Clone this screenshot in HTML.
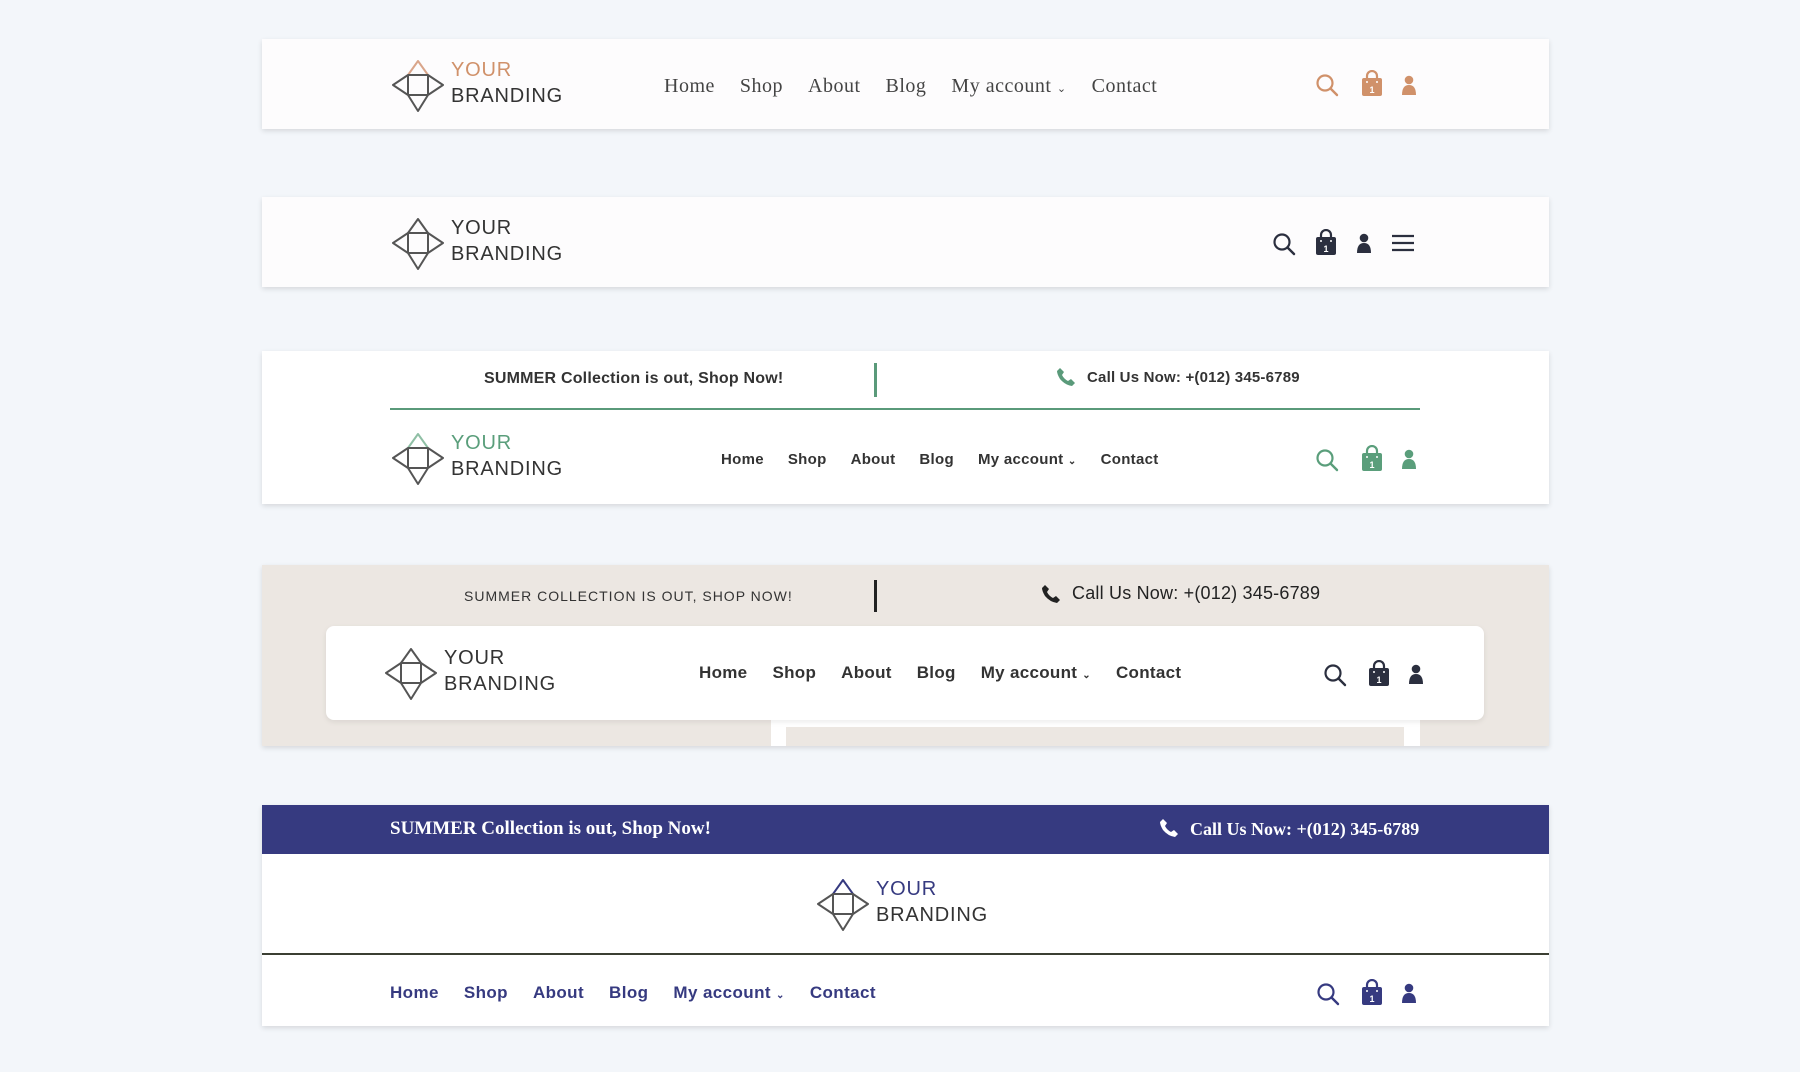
<!DOCTYPE html>
<html><head><meta charset="utf-8"><style>
*{margin:0;padding:0;box-sizing:border-box}
body{width:1800px;height:1072px;background:#f3f6fa;position:relative;overflow:hidden;font-family:"Liberation Sans",sans-serif}
.p{position:absolute;left:262px;width:1287px;box-shadow:0 2px 5px rgba(0,0,0,.12)}
.a{position:absolute;white-space:nowrap}
.logo{position:absolute;width:180px;height:56px}
.logo svg{position:absolute;left:0;top:2px}
.logo .t{position:absolute;left:59px;font-size:20px;letter-spacing:.8px;line-height:26px;color:#333}
.nav{position:absolute;display:flex;align-items:center;white-space:nowrap}
.ic{position:absolute}
</style></head><body>

<!-- Panel 1 -->
<div class="p" style="top:39px;height:90px;background:#fdfcfd"></div>
<div class="logo" style="left:392px;top:57px">
<svg width="52" height="54" viewBox="0 0 52 54"><g fill="none" stroke-width="2" stroke-linejoin="round"><path d="M26 2 L16 16 L36 16 Z" stroke="#d9a58a"/><path d="M16 16 H36 V36 H16 Z M16 16 L1 26 L16 36 M36 16 L51 26 L36 36 M16 36 L26 52 L36 36" stroke="#555"/></g></svg>
<div class="t" style="top:0;color:#d0916a">YOUR</div><div class="t" style="top:26px">BRANDING</div></div>
<div class="nav" style="left:664px;top:75px;font-family:'Liberation Serif',serif;font-size:20px;letter-spacing:.5px;color:#444;gap:25px">
<span>Home</span><span>Shop</span><span>About</span><span>Blog</span><span>My account <small style="font-size:11px">⌄</small></span><span>Contact</span></div>

<!-- Panel 2 -->
<div class="p" style="top:197px;height:90px;background:#fdfcfd"></div>
<div class="logo" style="left:392px;top:215px">
<svg width="52" height="54" viewBox="0 0 52 54"><g fill="none" stroke="#555" stroke-width="2" stroke-linejoin="round"><path d="M26 2 L16 16 L36 16 Z"/><path d="M16 16 H36 V36 H16 Z M16 16 L1 26 L16 36 M36 16 L51 26 L36 36 M16 36 L26 52 L36 36"/></g></svg>
<div class="t" style="top:0">YOUR</div><div class="t" style="top:26px">BRANDING</div></div>
<svg class="ic" style="left:1390px;top:233px" width="26" height="20" viewBox="0 0 26 20"><g stroke="#2b2f3f" stroke-width="2.2"><path d="M2 3H24M2 10H24M2 17H24"/></g></svg>

<!-- Panel 3 -->
<div class="p" style="top:351px;height:153px;background:#fff"></div>
<div class="a" style="left:484px;top:370px;font-size:16px;letter-spacing:.2px;font-weight:bold;color:#333">SUMMER Collection is out, Shop Now!</div>
<div class="a" style="left:874px;top:363px;width:3px;height:34px;background:#5a9a7a"></div>
<svg class="ic" style="left:1056px;top:367px" width="20" height="20" viewBox="0 0 20 20"><path d="M4 1 L8 5 L6 8 Q8 12 12 14 L15 12 L19 16 L16 19 Q9 18 4 12 Q1 7 1 4 Z" fill="#5a9a7a"/></svg>
<div class="a" style="left:1087px;top:369px;font-size:15px;letter-spacing:.2px;font-weight:bold;color:#333">Call Us Now: +(012) 345-6789</div>
<div class="a" style="left:390px;top:408px;width:1030px;height:2px;background:#5a9a7a"></div>
<div class="logo" style="left:392px;top:430px">
<svg width="52" height="54" viewBox="0 0 52 54"><g fill="none" stroke-width="2" stroke-linejoin="round"><path d="M26 2 L16 16 L36 16 Z" stroke="#8fbfa5"/><path d="M16 16 H36 V36 H16 Z M16 16 L1 26 L16 36 M36 16 L51 26 L36 36 M16 36 L26 52 L36 36" stroke="#555"/></g></svg>
<div class="t" style="top:0;color:#5a9e7b">YOUR</div><div class="t" style="top:26px">BRANDING</div></div>
<div class="nav" style="left:721px;top:451px;font-size:15px;letter-spacing:.3px;font-weight:bold;color:#333;gap:24px">
<span>Home</span><span>Shop</span><span>About</span><span>Blog</span><span>My account <small style="font-size:10px">⌄</small></span><span>Contact</span></div>

<!-- Panel 4 -->
<div class="p" style="top:565px;height:181px;background:#ece7e2"></div>
<div class="a" style="left:464px;top:588px;font-size:14px;color:#333;letter-spacing:1px">SUMMER COLLECTION IS OUT, SHOP NOW!</div>
<div class="a" style="left:874px;top:580px;width:3px;height:32px;background:#222"></div>
<svg class="ic" style="left:1041px;top:584px" width="20" height="20" viewBox="0 0 20 20"><path d="M4 1 L8 5 L6 8 Q8 12 12 14 L15 12 L19 16 L16 19 Q9 18 4 12 Q1 7 1 4 Z" fill="#222"/></svg>
<div class="a" style="left:1072px;top:583px;font-size:18px;letter-spacing:.2px;color:#222">Call Us Now: +(012) 345-6789</div>
<div class="a" style="left:771px;top:700px;width:649px;height:46px;background:#fff"></div>
<div class="a" style="left:786px;top:727px;width:618px;height:19px;background:#ece7e2"></div>
<div class="a" style="left:326px;top:626px;width:1158px;height:94px;background:#fff;border-radius:8px;box-shadow:0 2px 6px rgba(0,0,0,.08)"></div>
<div class="logo" style="left:385px;top:645px">
<svg width="52" height="54" viewBox="0 0 52 54"><g fill="none" stroke="#555" stroke-width="2" stroke-linejoin="round"><path d="M26 2 L16 16 L36 16 Z"/><path d="M16 16 H36 V36 H16 Z M16 16 L1 26 L16 36 M36 16 L51 26 L36 36 M16 36 L26 52 L36 36"/></g></svg>
<div class="t" style="top:0">YOUR</div><div class="t" style="top:26px">BRANDING</div></div>
<div class="nav" style="left:699px;top:663px;font-size:17px;letter-spacing:.3px;font-weight:bold;color:#333;gap:25px">
<span>Home</span><span>Shop</span><span>About</span><span>Blog</span><span>My account <small style="font-size:10px">⌄</small></span><span>Contact</span></div>

<!-- Panel 5 -->
<div class="p" style="top:805px;height:221px;background:#fff"></div>
<div class="a" style="left:262px;top:805px;width:1287px;height:49px;background:#363a80"></div>
<div class="a" style="left:390px;top:818px;font-family:'Liberation Serif',serif;font-weight:bold;font-size:19px;color:#fff">SUMMER Collection is out, Shop Now!</div>
<svg class="ic" style="left:1159px;top:818px" width="20" height="20" viewBox="0 0 20 20"><path d="M4 1 L8 5 L6 8 Q8 12 12 14 L15 12 L19 16 L16 19 Q9 18 4 12 Q1 7 1 4 Z" fill="#fff"/></svg>
<div class="a" style="left:1190px;top:819px;font-family:'Liberation Serif',serif;font-weight:bold;font-size:18px;color:#fff">Call Us Now: +(012) 345-6789</div>
<div class="logo" style="left:817px;top:876px">
<svg width="52" height="54" viewBox="0 0 52 54"><g fill="none" stroke-width="2" stroke-linejoin="round"><path d="M26 2 L16 16 L36 16 Z" stroke="#363a80"/><path d="M16 16 H36 V36 H16 Z M16 16 L1 26 L16 36 M36 16 L51 26 L36 36 M16 36 L26 52 L36 36" stroke="#555"/></g></svg>
<div class="t" style="top:0;color:#363a80">YOUR</div><div class="t" style="top:26px">BRANDING</div></div>
<div class="a" style="left:262px;top:953px;width:1287px;height:2px;background:#3b3f33"></div>
<div class="nav" style="left:390px;top:983px;font-size:17px;letter-spacing:.4px;font-weight:bold;color:#363a80;gap:25px">
<span>Home</span><span>Shop</span><span>About</span><span>Blog</span><span>My account <small style="font-size:10px">⌄</small></span><span>Contact</span></div>

<!-- icon sets -->
<svg width="0" height="0" style="position:absolute"><defs>
<g id="srch"><circle cx="10" cy="10" r="7.5" fill="none" stroke-width="2.2" stroke="currentColor"/><path d="M15.5 15.5 L22 22" stroke="currentColor" stroke-width="2.4" stroke-linecap="round"/></g>
<g id="bag"><path d="M6 9 V6 A5 5 0 0 1 16 6 V9" fill="none" stroke="currentColor" stroke-width="2.2"/><rect x="1" y="8" width="20" height="18" rx="2" fill="currentColor"/><circle cx="6" cy="12" r="1" fill="#fff"/><circle cx="16" cy="12" r="1" fill="#fff"/><text x="11" y="23" font-size="9" font-weight="bold" text-anchor="middle" fill="#fff" font-family="Liberation Sans">1</text></g>
<g id="usr"><circle cx="7" cy="5" r="4.3" fill="currentColor"/><path d="M0 20 Q0 10 7 10 Q14 10 14 20 Z" fill="currentColor"/></g>
</defs></svg>

<svg class="ic" style="left:1315px;top:73px;color:#d0916a" width="26" height="26"><use href="#srch"/></svg>
<svg class="ic" style="left:1361px;top:70px;color:#d0916a" width="22" height="28"><use href="#bag"/></svg>
<svg class="ic" style="left:1402px;top:75px;color:#d0916a" width="14" height="22"><use href="#usr"/></svg>

<svg class="ic" style="left:1272px;top:232px;color:#2b2f3f" width="26" height="26"><use href="#srch"/></svg>
<svg class="ic" style="left:1315px;top:229px;color:#2b2f3f" width="22" height="28"><use href="#bag"/></svg>
<svg class="ic" style="left:1357px;top:233px;color:#2b2f3f" width="14" height="22"><use href="#usr"/></svg>

<svg class="ic" style="left:1315px;top:448px;color:#5a9e7b" width="26" height="26"><use href="#srch"/></svg>
<svg class="ic" style="left:1361px;top:445px;color:#5a9e7b" width="22" height="28"><use href="#bag"/></svg>
<svg class="ic" style="left:1402px;top:449px;color:#5a9e7b" width="14" height="22"><use href="#usr"/></svg>

<svg class="ic" style="left:1323px;top:663px;color:#2b2f3f" width="26" height="26"><use href="#srch"/></svg>
<svg class="ic" style="left:1368px;top:660px;color:#2b2f3f" width="22" height="28"><use href="#bag"/></svg>
<svg class="ic" style="left:1409px;top:664px;color:#2b2f3f" width="14" height="22"><use href="#usr"/></svg>

<svg class="ic" style="left:1316px;top:982px;color:#363a80" width="26" height="26"><use href="#srch"/></svg>
<svg class="ic" style="left:1361px;top:979px;color:#363a80" width="22" height="28"><use href="#bag"/></svg>
<svg class="ic" style="left:1402px;top:983px;color:#363a80" width="14" height="22"><use href="#usr"/></svg>

</body></html>
